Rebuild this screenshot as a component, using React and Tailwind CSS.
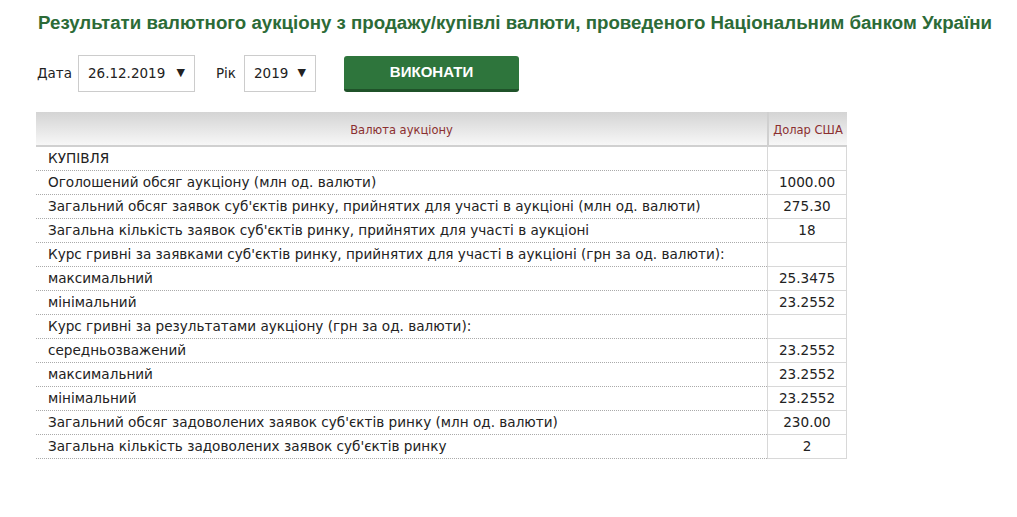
export default function App() {
  const rows = [
    ["КУПІВЛЯ", ""],
    ["Оголошений обсяг аукціону (млн од. валюти)", "1000.00"],
    ["Загальний обсяг заявок суб'єктів ринку, прийнятих для участі в аукціоні (млн од. валюти)", "275.30"],
    ["Загальна кількість заявок суб'єктів ринку, прийнятих для участі в аукціоні", "18"],
    ["Курс гривні за заявками суб'єктів ринку, прийнятих для участі в аукціоні (грн за од. валюти):", ""],
    ["максимальний", "25.3475"],
    ["мінімальний", "23.2552"],
    ["Курс гривні за результатами аукціону (грн за од. валюти):", ""],
    ["середньозважений", "23.2552"],
    ["максимальний", "23.2552"],
    ["мінімальний", "23.2552"],
    ["Загальний обсяг задоволених заявок суб'єктів ринку (млн од. валюти)", "230.00"],
    ["Загальна кількість задоволених заявок суб'єктів ринку", "2"],
  ];
  return (
    <div className="bg-white w-[1017px] h-[517px] text-[#222]" style={{ fontFamily: "'DejaVu Sans', Verdana, sans-serif" }}>
      <h1 className="pl-[38px] pt-[11px] text-[18.7px] font-bold text-[#2c6b37] leading-[24px]" style={{ fontFamily: "'Liberation Sans', Arial, sans-serif" }}>
        Результати валютного аукціону з продажу/купівлі валюти, проведеного Національним банком України
      </h1>
      <div className="flex items-center pl-[37px] mt-[20px] text-[13.5px]">
        <span>Дата</span>
        <div className="ml-[6px] w-[117px] h-[37px] border border-[#ccc] flex items-center justify-between px-[9px]">
          <span>26.12.2019</span><span className="text-[11px]">▼</span>
        </div>
        <span className="ml-[21px]">Рік</span>
        <div className="ml-[8px] w-[72px] h-[37px] border border-[#ccc] flex items-center justify-between px-[9px]">
          <span>2019</span><span className="text-[11px]">▼</span>
        </div>
        <div className="ml-[28px] w-[175px] h-[36px] rounded-[3px] bg-[#2e753c] border-b-[3px] border-[#1f5229] flex items-center justify-center text-white font-bold text-[15px]" style={{ fontFamily: "'Liberation Sans', Arial, sans-serif" }}>
          ВИКОНАТИ
        </div>
      </div>
      <div className="ml-[36px] mt-[20px] w-[811px] text-[13.6px]">
        <div className="flex h-[35px] bg-gradient-to-b from-[#d4d4d4] to-[#f7f7f7] border-b-2 border-[#d0d0d0] text-[#8b2f2f] text-[11.5px]">
          <div className="flex-1 flex items-end justify-center pb-[6px]">Валюта аукціону</div>
          <div className="w-[80px] border-l-2 border-[#d0d0d0] flex items-end justify-center pb-[6px]">Долар США</div>
        </div>
        {rows.map(([l, v], i) => (
          <div key={i} className="flex h-[24px]">
            <div className="flex-1 border-b border-dotted border-[#aaa] pl-[12px] flex items-center">{l}</div>
            <div className="w-[80px] border-l border-r border-b border-[#d8d8d8] flex items-center justify-center">{v}</div>
          </div>
        ))}
      </div>
    </div>
  );
}
